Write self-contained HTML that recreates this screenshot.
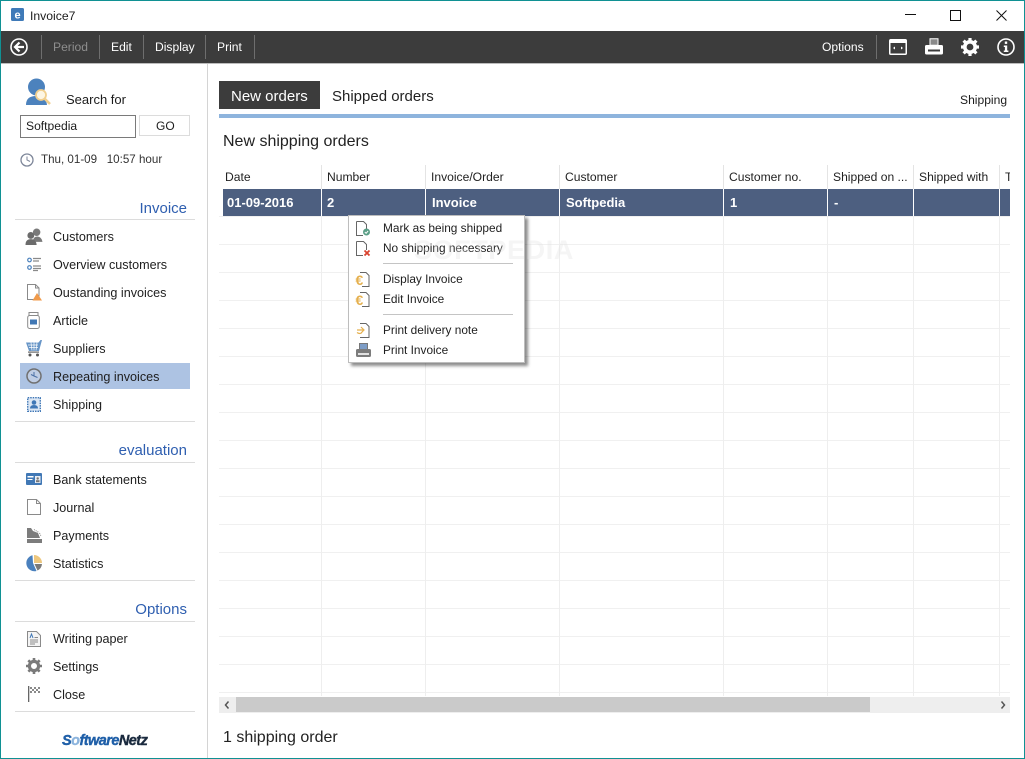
<!DOCTYPE html>
<html><head><meta charset="utf-8"><title>Invoice7</title>
<style>
html,body{margin:0;padding:0;background:#fff}
#w{position:relative;width:1025px;height:759px;overflow:hidden;background:#fff;font-family:"Liberation Sans",sans-serif;font-size:12.5px;color:#1c1c1c}
#w div,#w span.t{position:absolute;white-space:nowrap}
.t{line-height:16px}
svg{position:absolute;overflow:visible}
.nav{color:#fff;font-size:12.1px;top:39px}
.sep{background:#6e6e6e;width:1px;top:35px;height:24px}
.hr{background:#dcdcdc;height:1px;left:15px;width:180px}
.sec{right:838px;font-size:15px;color:#2f5fb0;line-height:18px}
.it{left:53px;font-size:12.6px;line-height:16px;color:#1e1e1e}
.h{top:169px;font-size:12.1px;line-height:16px;color:#222}
.c{top:195px;color:#fff;font-weight:bold;font-size:13px;line-height:16px}
.vl{width:1px;background:#eeeeee;top:216px;height:480px}
.vh{width:1px;background:#e4e4e4;top:165px;height:24px}
.vw{width:1px;background:#fff;top:189px;height:27px}
.m{left:383px;font-size:11.85px;line-height:16px;color:#1e1e1e}
</style></head><body>
<div id="w">
<!-- window border -->
<div style="left:0;top:0;width:1025px;height:1px;background:#109193"></div>
<div style="left:0;top:0;width:1px;height:759px;background:#109193"></div>
<div style="left:1024px;top:0;width:1px;height:759px;background:#109193"></div>
<div style="left:0;top:758px;width:1025px;height:1px;background:#109193"></div>

<!-- title bar -->
<svg style="left:11px;top:8px" width="13" height="13" viewBox="0 0 13 13"><rect width="13" height="13" rx="1.5" fill="#3f7ab8"/><text x="6.5" y="10.5" font-family="Liberation Sans" font-weight="bold" font-size="11" text-anchor="middle" fill="#fff">e</text></svg>
<span class="t" style="left:30px;top:8px;font-size:12.2px">Invoice7</span>
<svg style="left:905px;top:14px" width="11" height="2"><rect width="11" height="1" fill="#111"/></svg>
<svg style="left:950px;top:10px" width="11" height="11"><rect x=".5" y=".5" width="10" height="10" fill="none" stroke="#111"/></svg>
<svg style="left:996px;top:10px" width="11" height="11"><path d="M.5.5l10 10M10.500.5l-10 10" stroke="#111" fill="none"/></svg>

<!-- toolbar -->
<div style="left:1px;top:31px;width:1023px;height:32px;background:#3c3c3c"></div>
<div style="left:1px;top:63px;width:1023px;height:1px;background:#bcbcbc"></div>
<svg style="left:10px;top:38px" width="18" height="18" viewBox="0 0 18 18"><circle cx="9" cy="9" r="8" fill="none" stroke="#fff" stroke-width="1.6"/><path d="M9.500 4.500L5 9l4.500 4.500M5.500 9H14" fill="none" stroke="#fff" stroke-width="2.200"/></svg>
<div class="sep" style="left:41px"></div>
<span class="t nav" style="left:53px;color:#8e8e8e">Period</span>
<div class="sep" style="left:99px"></div>
<span class="t nav" style="left:111px">Edit</span>
<div class="sep" style="left:143px"></div>
<span class="t nav" style="left:155px">Display</span>
<div class="sep" style="left:205px"></div>
<span class="t nav" style="left:217px">Print</span>
<div class="sep" style="left:254px"></div>
<span class="t nav" style="left:822px">Options</span>
<div class="sep" style="left:876px"></div>
<svg style="left:889px;top:39px" width="18" height="16" viewBox="0 0 18 16"><rect x=".75" y=".75" width="16.500" height="14.500" rx="1" fill="none" stroke="#fff" stroke-width="1.500"/><rect x="1" y="1" width="16" height="3" fill="#fff"/><path d="M4 9l2-1.500v3zM14 9l-2-1.500v3z" fill="#fff"/></svg>
<svg style="left:925px;top:38px" width="18" height="17" viewBox="0 0 18 17"><path d="M5 .7h8v6.500H5z" fill="#8a8a8a" stroke="#fff"/><path d="M1.500 7h15q1.500 0 1.500 1.500V15q0 1.500-1.500 1.500h-15Q0 16.500 0 15V8.500Q0 7 1.500 7z" fill="#fff"/><rect x="3" y="11.500" width="12" height="2" fill="#3c3c3c"/></svg>
<svg style="left:961px;top:38px" width="18" height="18" viewBox="0 0 18 18"><circle cx="9" cy="9" r="5.200" fill="none" stroke="#fff" stroke-width="3.600"/><path d="M9 9L9 0M9 9L15.400 2.600M9 9L18 9M9 9L15.400 15.400M9 9L9 18M9 9L2.600 15.400M9 9L0 9M9 9L2.600 2.600" stroke="#fff" stroke-width="3.200" stroke-dasharray="0 6.200 3 9"/></svg>
<svg style="left:997px;top:38px" width="18" height="18" viewBox="0 0 18 18"><circle cx="9" cy="9" r="8" fill="none" stroke="#fff" stroke-width="1.600"/><rect x="7.800" y="3.500" width="2.400" height="2.400" fill="#fff"/><path d="M6.800 7.500h3.400v5h1.200v1.500H6.800v-1.500h1.100V9H6.800z" fill="#fff"/></svg>

<!-- sidebar divider -->
<div style="left:207px;top:64px;width:1px;height:694px;background:#d4d4d4"></div>

<!-- search -->
<svg style="left:25px;top:78px" width="27" height="30" viewBox="0 0 27 30"><circle cx="11.500" cy="9" r="8.500" fill="#4c82bd"/><path d="M1 27q0-9 10-9t11 9z" fill="#4c82bd"/><circle cx="16" cy="17" r="5" fill="#fdf6e4" stroke="#f1cf8e" stroke-width="1.800"/><path d="M20 21l5 5" stroke="#f1cf8e" stroke-width="2.600"/></svg>
<span class="t" style="left:66px;top:92px;font-size:13px">Search for</span>
<div style="left:20px;top:115px;width:114px;height:21px;border:1px solid #7a7a7a"></div>
<span class="t" style="left:26px;top:118px;font-size:12.1px">Softpedia</span>
<div style="left:139px;top:115px;width:49px;height:19px;border:1px solid #dcdcdc"></div>
<span class="t" style="left:156px;top:118px;font-size:12px">GO</span>
<svg style="left:20px;top:153px" width="14" height="14" viewBox="0 0 14 14"><circle cx="7" cy="7" r="6" fill="#fff" stroke="#7d8699" stroke-width="1.300"/><path d="M7 3.500V7l3 1.500" stroke="#7d8699" fill="none"/></svg>
<span class="t" style="left:41px;top:152px;font-size:11.6px;color:#333">Thu, 01-09 &nbsp; 10:57 hour</span>

<!-- Invoice section -->
<span class="t sec" style="top:200px">Invoice</span>
<div class="hr" style="top:219px"></div>
<svg style="left:25px;top:228px" width="18" height="17" viewBox="0 0 16 16"><circle cx="10.500" cy="4" r="3.500" fill="#7a7a7a"/><path d="M7 13q0-5 4-5t5 5z" fill="#7a7a7a"/><circle cx="5" cy="7" r="3.200" fill="#6b6b6b"/><path d="M0 16q0-5.500 5-5.500t5.500 5.500z" fill="#6b6b6b"/></svg>
<span class="t it" style="top:229px">Customers</span>
<svg style="left:27px;top:257px" width="14" height="14" viewBox="0 0 14 14"><circle cx="2.500" cy="3" r="1.800" fill="#fff" stroke="#4c82bd" stroke-width="1.200"/><circle cx="2.500" cy="10.500" r="1.800" fill="#fff" stroke="#4c82bd" stroke-width="1.200"/><path d="M6 1.500h8M6 4h6M6 9h8M6 11.500h8M6 13.500h5" stroke="#8a8a8a" stroke-width="1.200"/></svg>
<span class="t it" style="top:257px">Overview customers</span>
<svg style="left:27px;top:284px" width="15" height="17" viewBox="0 0 15 17"><path d="M.5.500h8l3.500 3.500v11.500H.5z" fill="#fff" stroke="#8a8a8a"/><path d="M8.500.500V4H12" fill="none" stroke="#8a8a8a"/><path d="M10 9l5 7.500H5.500z" fill="#f09a4a"/></svg>
<span class="t it" style="top:285px">Oustanding invoices</span>
<svg style="left:27px;top:312px" width="13" height="17" viewBox="0 0 13 17"><rect x="2" y=".5" width="9" height="3" fill="#fff" stroke="#8a8a8a"/><rect x=".7" y="3.500" width="11.600" height="13" rx="2" fill="#fff" stroke="#8a8a8a"/><rect x="3" y="7.500" width="7" height="5" fill="#4178b5"/></svg>
<span class="t it" style="top:313px">Article</span>
<svg style="left:26px;top:340px" width="16" height="17" viewBox="0 0 16 17"><path d="M0 2.500h12.500l2-2.500h1.500l-3 11H3z" fill="#4c82bd" opacity=".85"/><path d="M2 5h10M3 7.500h9M5 2.500l1 8M8 2.500v8M11 2.500l-1 8" stroke="#fff" stroke-width=".7"/><rect x="2" y="11.500" width="11" height="1.200" fill="#666"/><circle cx="4" cy="15" r="1.500" fill="#555"/><circle cx="11.500" cy="15" r="1.500" fill="#555"/></svg>
<span class="t it" style="top:341px">Suppliers</span>
<div style="left:20px;top:363px;width:170px;height:26px;background:#adc3e3"></div>
<svg style="left:26px;top:368px" width="16" height="16" viewBox="0 0 16 16"><circle cx="8" cy="8" r="7" fill="#bfcde4" stroke="#707070" stroke-width="1.500"/><path d="M8 4v4l3.500 1.500M5 6.500L8 8" stroke="#4a6fa5" fill="none"/></svg>
<span class="t it" style="top:369px">Repeating invoices</span>
<svg style="left:27px;top:397px" width="14" height="15" viewBox="0 0 14 15"><rect x=".7" y=".7" width="12.600" height="13.600" fill="#dce7f4" stroke="#3f77b6" stroke-width="1.400" stroke-dasharray="1.500 1"/><circle cx="7" cy="5.500" r="2.300" fill="#3f77b6"/><path d="M3 11.500q0-3.500 4-3.500t4 3.500z" fill="#3f77b6"/></svg>
<span class="t it" style="top:397px">Shipping</span>
<div class="hr" style="top:421px"></div>

<!-- evaluation -->
<span class="t sec" style="top:442px">evaluation</span>
<div class="hr" style="top:462px"></div>
<svg style="left:26px;top:473px" width="16" height="12" viewBox="0 0 16 12"><rect width="16" height="12" rx="1" fill="#4178b5"/><rect x="1.500" y="3" width="6" height="1.500" fill="#fff"/><rect x="1.500" y="6" width="5" height="1" fill="#fff"/><rect x="9" y="3" width="5.500" height="7" fill="#e9eef5"/><circle cx="11.700" cy="5.500" r="1.200" fill="#777"/><rect x="10" y="7.200" width="3.500" height="2" fill="#777"/></svg>
<span class="t it" style="top:472px">Bank statements</span>
<svg style="left:27px;top:499px" width="14" height="16" viewBox="0 0 14 16"><path d="M.5.500h9l4 4v11H.5z" fill="#fff" stroke="#8a8a8a"/><path d="M9.500.500v4h4" fill="none" stroke="#8a8a8a"/></svg>
<span class="t it" style="top:500px">Journal</span>
<svg style="left:27px;top:528px" width="15" height="15" viewBox="0 0 15 15"><path d="M0 0h4l2 3 5 2 2 5H0z" fill="#7c7c7c"/><path d="M7 1.500l5 3M12.500 5l1.500 3" stroke="#8c8c8c" stroke-dasharray="1 1"/><rect y="11" width="15" height="4" fill="#7c7c7c"/></svg>
<span class="t it" style="top:528px">Payments</span>
<svg style="left:26px;top:555px" width="16" height="16" viewBox="0 0 16 16"><path d="M8 0a8 8 0 0 1 8 8H8z" fill="#edc77e"/><path d="M6.500.2L7 8l3.500 8A8 8 0 0 1 6.500.2z" fill="#4a80bd"/><path d="M8.500 9H16a8 8 0 0 1-4.500 6.500z" fill="#7a7a7a"/></svg>
<span class="t it" style="top:556px">Statistics</span>
<div class="hr" style="top:580px"></div>

<!-- options -->
<span class="t sec" style="top:601px">Options</span>
<div class="hr" style="top:621px"></div>
<svg style="left:27px;top:631px" width="14" height="16" viewBox="0 0 14 16"><path d="M.5.500h9l4 4v11H.5z" fill="#f4f4f4" stroke="#8a8a8a"/><path d="M3 7l1.500-4L6 7" fill="none" stroke="#3f77b6"/><path d="M7.500 6.500H11M3 9h8M3 11h8M3 13h5" stroke="#8a8a8a"/></svg>
<span class="t it" style="top:631px">Writing paper</span>
<svg style="left:26px;top:658px" width="16" height="16" viewBox="0 0 16 16"><circle cx="8" cy="8" r="4.600" fill="none" stroke="#7a7a7a" stroke-width="3.200"/><path d="M8 0v16M0 8h16M2.300 2.300l11.400 11.400M13.700 2.300L2.300 13.700" stroke="#7a7a7a" stroke-width="2.600" stroke-dasharray="2.500 11 2.500 20"/></svg>
<span class="t it" style="top:659px">Settings</span>
<svg style="left:28px;top:686px" width="13" height="16" viewBox="0 0 13 16"><rect width="1.300" height="16" fill="#666"/><path d="M2 1h2v2H2zM6 1h2v2H6zM10 1h2v2h-2zM4 3h2v2H4zM8 3h2v2H8zM2 5h2v2H2zM6 5h2v2H6zM10 5h2v2h-2z" fill="#8a8a8a"/></svg>
<span class="t it" style="top:687px">Close</span>
<div class="hr" style="top:711px"></div>
<span class="t" style="left:62px;top:733px;font-size:14.500px;font-weight:bold;font-style:italic;letter-spacing:-.55px;color:#1f5fa8;-webkit-text-stroke:.4px currentColor">S<span style="color:#8db5de">o</span>ftware<span style="color:#1a2a3e">Netz</span></span>

<!-- tabs -->
<div style="left:219px;top:81px;width:101px;height:28px;background:#3c3c3c"></div>
<span class="t" style="left:231px;top:89px;font-size:15px;color:#fff">New orders</span>
<span class="t" style="left:332px;top:89px;font-size:15px;color:#222">Shipped orders</span>
<span class="t" style="left:960px;top:92px;font-size:12.1px">Shipping</span>
<div style="left:219px;top:114px;width:791px;height:4px;background:#8eb4dd"></div>
<span class="t" style="left:223px;top:134px;font-size:16px;color:#222">New shipping orders</span>

<!-- table -->
<div class="vh" style="left:321px"></div><div class="vh" style="left:425px"></div><div class="vh" style="left:559px"></div><div class="vh" style="left:723px"></div><div class="vh" style="left:827px"></div><div class="vh" style="left:913px"></div><div class="vh" style="left:999px"></div>
<span class="t h" style="left:225px">Date</span>
<span class="t h" style="left:327px">Number</span>
<span class="t h" style="left:431px">Invoice/Order</span>
<span class="t h" style="left:565px">Customer</span>
<span class="t h" style="left:729px">Customer no.</span>
<span class="t h" style="left:833px">Shipped on ...</span>
<span class="t h" style="left:919px">Shipped with</span>
<span class="t h" style="left:1005px;width:5px;overflow:hidden">T</span>
<div style="left:219px;top:216px;width:791px;height:480px;background:repeating-linear-gradient(to bottom,#f0f0f0 0,#f0f0f0 1px,transparent 1px,transparent 28px)"></div>
<div class="vl" style="left:321px"></div><div class="vl" style="left:425px"></div><div class="vl" style="left:559px"></div><div class="vl" style="left:723px"></div><div class="vl" style="left:827px"></div><div class="vl" style="left:913px"></div><div class="vl" style="left:999px"></div>
<div style="left:223px;top:189px;width:787px;height:27px;background:#4d5f80"></div>
<div class="vw" style="left:321px"></div><div class="vw" style="left:425px"></div><div class="vw" style="left:559px"></div><div class="vw" style="left:723px"></div><div class="vw" style="left:827px"></div><div class="vw" style="left:913px"></div><div class="vw" style="left:999px"></div>
<span class="t c" style="left:227px">01-09-2016</span>
<span class="t c" style="left:327px">2</span>
<span class="t c" style="left:432px">Invoice</span>
<span class="t c" style="left:566px">Softpedia</span>
<span class="t c" style="left:730px">1</span>
<span class="t c" style="left:834px">-</span>

<!-- scrollbar -->
<div style="left:219px;top:697px;width:791px;height:16px;background:#eeeeee"></div>
<div style="left:236px;top:697px;width:634px;height:15px;background:#cacaca"></div>
<svg style="left:224px;top:701px" width="6" height="8"><path d="M4.500.5L1.500 4l3 3.500" fill="none" stroke="#555" stroke-width="1.500"/></svg>
<svg style="left:1000px;top:701px" width="6" height="8"><path d="M1.500.5L4.500 4l-3 3.500" fill="none" stroke="#555" stroke-width="1.500"/></svg>
<span class="t" style="left:223px;top:730px;font-size:16px;color:#222">1 shipping order</span>

<!-- context menu -->
<div style="left:348px;top:215px;width:175px;height:146px;background:#fff;border:1px solid #bdbdbd;box-shadow:3px 3px 3px rgba(0,0,0,.45)"></div>
<svg style="left:356px;top:221px" width="15" height="15" viewBox="0 0 15 15"><path d="M.5.500h7l3 3V10M7 14.500H.5V.5" fill="#fff" stroke="#666"/><circle cx="10.500" cy="11" r="3.500" fill="#5b9f87"/><path d="M8.800 11l1.300 1.300 2-2.300" stroke="#fff" fill="none"/></svg>
<span class="t m" style="top:220px">Mark as being shipped</span>
<svg style="left:356px;top:241px" width="15" height="15" viewBox="0 0 15 15"><path d="M.5.500h7l3 3V9M7 14.500H.5V.5" fill="#fff" stroke="#666"/><path d="M8.500 9.500l5 5M13.500 9.500l-5 5" stroke="#d9432f" stroke-width="1.800"/></svg>
<span class="t m" style="top:240px">No shipping necessary</span>
<div style="left:383px;top:263px;width:130px;height:1px;background:#c4c4c4"></div>
<svg style="left:356px;top:272px" width="14" height="15" viewBox="0 0 14 15"><path d="M4 .5h6l3 3v11H6" fill="#fff" stroke="#666"/><text x="-.5" y="13" font-family="Liberation Sans" font-size="14" font-weight="bold" fill="#e5b04e">€</text></svg>
<span class="t m" style="top:271px">Display Invoice</span>
<svg style="left:356px;top:292px" width="14" height="15" viewBox="0 0 14 15"><path d="M4 .5h6l3 3v11H6" fill="#fff" stroke="#666"/><text x="-.5" y="13" font-family="Liberation Sans" font-size="14" font-weight="bold" fill="#e5b04e">€</text></svg>
<span class="t m" style="top:291px">Edit Invoice</span>
<div style="left:383px;top:314px;width:130px;height:1px;background:#c4c4c4"></div>
<svg style="left:355px;top:323px" width="15" height="15" viewBox="0 0 15 15"><path d="M5 .5h6l3 3v11H5" fill="#fff" stroke="#666"/><path d="M2 7h6M6 4l3 3-3 3M2 9.500q3 2 5 0" fill="none" stroke="#e5b04e" stroke-width="1.200"/></svg>
<span class="t m" style="top:322px">Print delivery note</span>
<svg style="left:356px;top:343px" width="15" height="14" viewBox="0 0 15 14"><rect x="3.500" y=".5" width="8" height="6" fill="#7d9dc6" stroke="#777"/><rect y="6" width="15" height="8" rx="1.500" fill="#7c7c7c"/><rect x="2" y="10" width="11" height="2" fill="#e2e2e2"/></svg>
<span class="t m" style="top:342px">Print Invoice</span>

<!-- watermark (faint, sits over the table and menu) -->
<span class="t" style="left:414px;top:236px;font-size:27px;line-height:28px;font-weight:bold;letter-spacing:.6px;color:rgba(225,225,225,.35)">SOFTPEDIA</span>
</div>
</body></html>
